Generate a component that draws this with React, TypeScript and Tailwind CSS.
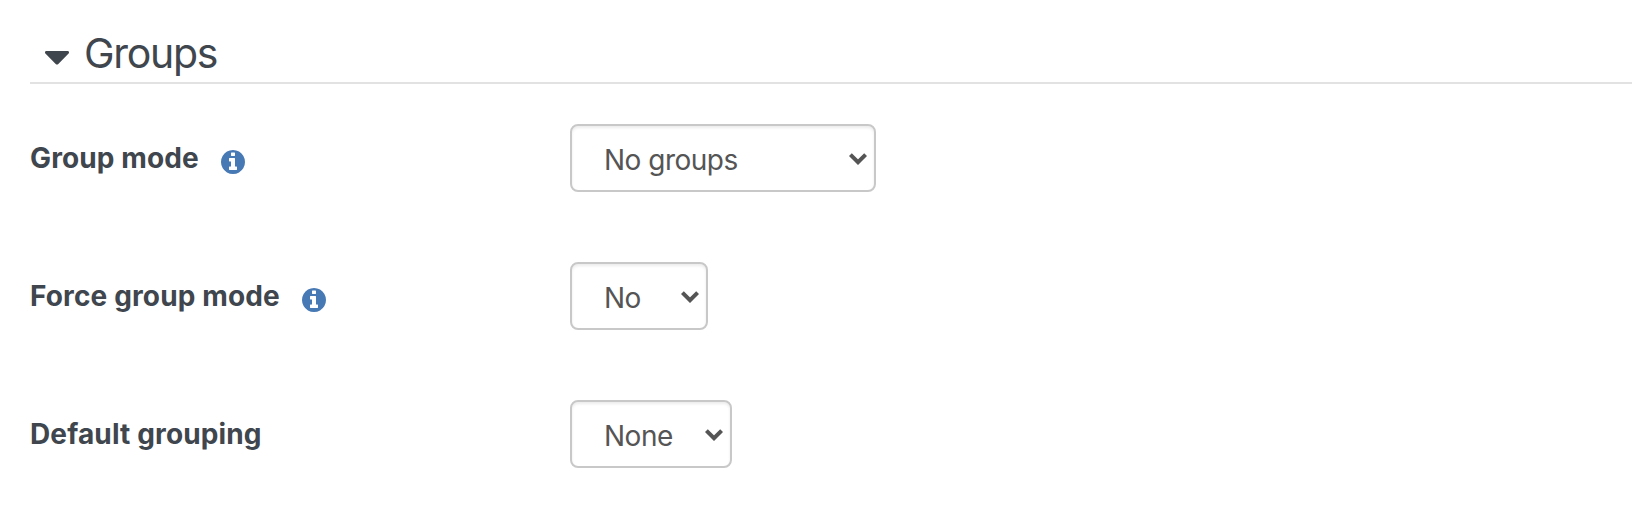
type Field = { label: string; help: boolean; value: string; labelClass: string; boxClass: string };

const fields: Field[] = [
  { label: "Group mode", help: true, value: "No groups", labelClass: "tracking-[0.12px]", boxClass: "w-[306px]" },
  { label: "Force group mode", help: true, value: "No", labelClass: "tracking-[0.14px]", boxClass: "w-[138px]" },
  { label: "Default grouping", help: false, value: "None", labelClass: "tracking-[0.14px]", boxClass: "w-[162px]" },
];

function InfoIcon() {
  return (
    <svg className="mt-3 size-6 shrink-0 text-[#4779b4]" viewBox="128 128 1536 1536" fill="currentColor">
      <path d="M1152 1376v-160q0-14-9-23t-23-9h-96v-512q0-14-9-23t-23-9h-320q-14 0-23 9t-9 23v160q0 14 9 23t23 9h96v320h-96q-14 0-23 9t-9 23v160q0 14 9 23t23 9h448q14 0 23-9t9-23zm-128-896v-160q0-14-9-23t-23-9h-192q-14 0-23 9t-9 23v160q0 14 9 23t23 9h192q14 0 23-9t9-23zm640 416q0 209-103 385.5t-279.5 279.5-385.5 103-385.5-103-279.5-279.5-103-385.5 103-385.5 279.5-279.5 385.5-103 385.5 103 279.5 279.5 103 385.5z" />
    </svg>
  );
}

function FieldRow({ field }: { field: Field }) {
  return (
    <div className="flex h-[68px]">
      <div className="flex w-[540px] shrink-0 items-start gap-[22px] pt-[14px]">
        <span className={`whitespace-nowrap text-[28px] font-bold leading-10 ${field.labelClass}`}>{field.label}</span>
        {field.help && <InfoIcon />}
      </div>
      <button
        type="button"
        className={`flex h-[68px] items-start justify-between rounded-lg border-2 border-[#c8c8c8] bg-white pl-8 pr-[7px] pt-[14px] text-[28px] font-[440] leading-10 tracking-[-0.5px] text-[#555555] shadow-[inset_0_2px_3px_rgba(0,0,0,0.08)] ${field.boxClass}`}
      >
        <span>{field.value}</span>
        <svg className="mt-[13px] h-3 w-[18px]" viewBox="0 0 18 12" fill="none" stroke="currentColor" strokeWidth="4">
          <path d="M1.4 1.6 9 9.1 16.6 1.6" />
        </svg>
      </button>
    </div>
  );
}

export default function App() {
  return (
    <main className="h-[512px] w-full overflow-hidden bg-white pl-[30px] pt-6 font-['Inter','Liberation_Sans',sans-serif] text-[#40464d]">
      <header className="flex h-[60px] items-start border-b-2 border-[#e2e2e2] pl-[15px]">
        <svg className="mt-[27px] h-[14px] w-6" viewBox="0 0 24 14" fill="currentColor">
          <path d="M1.5 0h21c1.4 0 2 1.5 1.1 2.5L13.3 12.9a1.8 1.8 0 0 1-2.6 0L.4 2.5C-.5 1.5.1 0 1.5 0Z" />
        </svg>
        <h1 className="ml-[15px] text-[41px] font-[440] leading-[58px] tracking-[-1.3px]">Groups</h1>
      </header>
      <section className="mt-10 flex flex-col gap-[70px]">
        {fields.map((field) => (
          <FieldRow key={field.label} field={field} />
        ))}
      </section>
    </main>
  );
}
